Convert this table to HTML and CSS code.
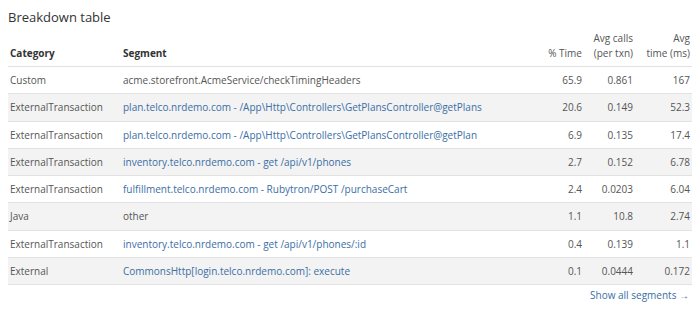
FILE: index.html
```html
<!DOCTYPE html>
<html>
<head>
    <title>Breakdown table</title>
    <link rel="stylesheet" href="styles.css">
</head>
<body>
    <div class="panel">
        <h2 class="panel-title">Breakdown table</h2>

        <table class="breakdown">
            <colgroup>
                <col class="col-category">
                <col>
                <col class="col-pct">
                <col class="col-calls">
                <col class="col-time">
            </colgroup>
            <thead>
                <tr>
                    <th>Category</th>
                    <th>Segment</th>
                    <th class="num">% Time</th>
                    <th class="num">Avg calls<br>(per txn)</th>
                    <th class="num">Avg<br>time (ms)</th>
                </tr>
            </thead>
            <tbody>
                <tr>
                    <td>Custom</td>
                    <td>acme.storefront.AcmeService/checkTimingHeaders</td>
                    <td class="num">65.9</td>
                    <td class="num">0.861</td>
                    <td class="num">167</td>
                </tr>
                <tr>
                    <td>ExternalTransaction</td>
                    <td><a href="#">plan.telco.nrdemo.com - /App\Http\Controllers\GetPlansController@getPlans</a></td>
                    <td class="num">20.6</td>
                    <td class="num">0.149</td>
                    <td class="num">52.3</td>
                </tr>
                <tr>
                    <td>ExternalTransaction</td>
                    <td><a href="#">plan.telco.nrdemo.com - /App\Http\Controllers\GetPlansController@getPlan</a></td>
                    <td class="num">6.9</td>
                    <td class="num">0.135</td>
                    <td class="num">17.4</td>
                </tr>
                <tr>
                    <td>ExternalTransaction</td>
                    <td><a href="#">inventory.telco.nrdemo.com - get /api/v1/phones</a></td>
                    <td class="num">2.7</td>
                    <td class="num">0.152</td>
                    <td class="num">6.78</td>
                </tr>
                <tr>
                    <td>ExternalTransaction</td>
                    <td><a href="#">fulfillment.telco.nrdemo.com - Rubytron/POST /purchaseCart</a></td>
                    <td class="num">2.4</td>
                    <td class="num">0.0203</td>
                    <td class="num">6.04</td>
                </tr>
                <tr>
                    <td>Java</td>
                    <td>other</td>
                    <td class="num">1.1</td>
                    <td class="num">10.8</td>
                    <td class="num">2.74</td>
                </tr>
                <tr>
                    <td>ExternalTransaction</td>
                    <td><a href="#">inventory.telco.nrdemo.com - get /api/v1/phones/:id</a></td>
                    <td class="num">0.4</td>
                    <td class="num">0.139</td>
                    <td class="num">1.1</td>
                </tr>
                <tr>
                    <td>External</td>
                    <td><a href="#">CommonsHttp[login.telco.nrdemo.com]: execute</a></td>
                    <td class="num">0.1</td>
                    <td class="num">0.0444</td>
                    <td class="num">0.172</td>
                </tr>
            </tbody>
        </table>

        <div class="show-all">
            <a href="#">Show all segments &rarr;</a>
        </div>
    </div>
</body>
</html>
```

FILE: styles.css
```css
body {
    font-family: "Open Sans", Arial, sans-serif;
    margin: 0;
    padding: 7px 8px;
    background-color: white;
    color: #555;
}
.panel-title {
    margin: 0 0 2px 0;
    font-size: 13px;
    line-height: 20px;
    font-weight: normal;
    color: #333;
}
.breakdown {
    width: 100%;
    border-collapse: collapse;
    table-layout: fixed;
    font-size: 10px;
    line-height: 15px;
}
.col-category {
    width: 113px;
}
.col-pct {
    width: 60px;
}
.col-calls {
    width: 51px;
}
.col-time {
    width: 57px;
}
.breakdown th {
    text-align: left;
    vertical-align: bottom;
    font-weight: normal;
    color: #555;
    padding: 2px 2px 5px 2px;
    border-bottom: 1px solid #e2e2e2;
}
.breakdown th:first-child,
.breakdown th:nth-child(2) {
    font-weight: bold;
    color: #333;
}
.breakdown td {
    padding: 6px 2px 5.25px 2px;
    border-bottom: 1px solid #e2e2e2;
    white-space: nowrap;
    overflow: hidden;
}
.breakdown tbody tr:nth-child(even) {
    background-color: #f3f3f3;
}
.breakdown .num {
    text-align: right;
}
.breakdown a {
    color: #3a6ea5;
    text-decoration: none;
}
.show-all {
    text-align: right;
    font-size: 10px;
    line-height: 15px;
    margin-top: 3px;
    padding-right: 3px;
}
.show-all a {
    color: #3a6ea5;
    text-decoration: none;
}
```
